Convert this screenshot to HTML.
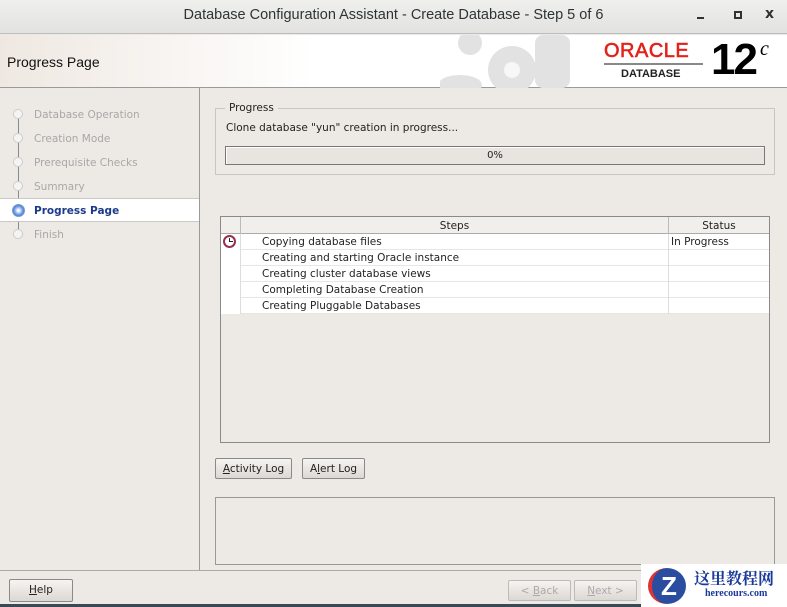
<!DOCTYPE html>
<html><head><style>
*{margin:0;padding:0;box-sizing:border-box}
body{width:787px;height:607px;overflow:hidden;background:#ede9e4;font-family:"DejaVu Sans","Liberation Sans",sans-serif;font-size:10.5px;color:#222;position:relative}
.a{position:absolute}
.btn{position:absolute;border:1px solid #8a8a8a;border-radius:2px;background:linear-gradient(#f6f4f1,#dcd8d3);text-align:center;line-height:20px;font-size:10.5px}
.row{position:absolute;left:241px;width:528px;height:16px;border-bottom:1px solid #e6e6e6;background:#fff}
</style></head><body>
<div class="a" style="left:0;top:0;width:787px;height:34px;background:linear-gradient(#efefee,#e2e2e1);border-bottom:1px solid #bdbdbd"></div>
<div class="a" style="left:0;top:7px;width:787px;text-align:center;font-family:'Liberation Sans',sans-serif;font-size:14.5px;color:#2e3436">Database Configuration Assistant - Create Database - Step 5 of 6</div>
<div class="a" style="left:697px;top:17px;width:7px;height:2px;background:#2e3436"></div>
<div class="a" style="left:734px;top:11px;width:8px;height:8px;border:2px solid #2e3436"></div>
<div class="a" style="left:765px;top:6px;font-size:14px;font-weight:bold;color:#2e3436">x</div>
<div class="a" style="left:0;top:35px;width:787px;height:53px;background:linear-gradient(90deg,#efe8e2,#fff 40%,#fff);border-bottom:1px solid #9a9a9a"></div>
<div class="a" style="left:7px;top:54px;font-family:'Liberation Sans',sans-serif;font-size:14px;color:#111">Progress Page</div>
<svg class="a" style="left:440px;top:35px" width="140" height="53"><g fill="#e2e2e2"><circle cx="72" cy="35" r="24"/><circle cx="30" cy="8" r="12"/><rect x="95" y="0" width="35" height="53" rx="8"/><ellipse cx="20" cy="50" rx="22" ry="10"/></g><circle cx="72" cy="35" r="8" fill="#f7f7f7"/></svg>
<div class="a" style="left:604px;top:40px;font-family:'Liberation Sans',sans-serif;font-size:20px;color:#e2231a;letter-spacing:0.5px;-webkit-text-stroke:0.6px #e2231a">ORACLE</div>
<div class="a" style="left:604px;top:63px;width:99px;height:2px;background:#888"></div>
<div class="a" style="left:621px;top:68px;font-family:'Liberation Sans',sans-serif;font-size:11px;font-weight:bold;color:#222">DATABASE</div>
<div class="a" style="left:711px;top:36px;font-family:'Liberation Sans',sans-serif;font-size:44px;font-weight:bold;color:#000;letter-spacing:-2px;line-height:48px">12</div>
<div class="a" style="left:760px;top:38px;font-family:'Liberation Serif',serif;font-style:italic;font-size:20px;color:#000">c</div>
<div class="a" style="left:199px;top:88px;width:1px;height:482px;background:#9a9a9a"></div>
<div class="a" style="left:18px;top:112px;width:1px;height:124px;background:#8a8a8a"></div>
<div class="a" style="left:0;top:198px;width:199px;height:24px;background:#fff;border-top:1px solid #c8c8c8;border-bottom:1px solid #c8c8c8"></div>
<div class="a" style="left:13px;top:109px;width:10px;height:10px;border-radius:50%;background:#f4f4f4;border:1px solid #ccc"></div>
<div class="a" style="left:13px;top:133px;width:10px;height:10px;border-radius:50%;background:#f4f4f4;border:1px solid #ccc"></div>
<div class="a" style="left:13px;top:157px;width:10px;height:10px;border-radius:50%;background:#f4f4f4;border:1px solid #ccc"></div>
<div class="a" style="left:13px;top:181px;width:10px;height:10px;border-radius:50%;background:#f4f4f4;border:1px solid #ccc"></div>
<div class="a" style="left:12px;top:204px;width:13px;height:13px;border-radius:50%;background:radial-gradient(#fff 10%,#5b8fe0 60%,#2a5cb8);border:1px solid #7a9ccc"></div>
<div class="a" style="left:13px;top:229px;width:10px;height:10px;border-radius:50%;background:#f4f4f4;border:1px solid #ccc"></div>
<div class="a" style="left:34px;top:109px;color:#a8a8a8;line-height:12px">Database Operation</div>
<div class="a" style="left:34px;top:133px;color:#a8a8a8;line-height:12px">Creation Mode</div>
<div class="a" style="left:34px;top:157px;color:#a8a8a8;line-height:12px">Prerequisite Checks</div>
<div class="a" style="left:34px;top:181px;color:#a8a8a8;line-height:12px">Summary</div>
<div class="a" style="left:34px;top:205px;color:#1a3a8a;font-weight:bold;line-height:12px">Progress Page</div>
<div class="a" style="left:34px;top:229px;color:#a8a8a8;line-height:12px">Finish</div>
<div class="a" style="left:215px;top:108px;width:560px;height:67px;border:1px solid #c9c5c0"></div>
<div class="a" style="left:225px;top:102px;padding:0 4px;background:#ede9e4">Progress</div>
<div class="a" style="left:226px;top:122px">Clone database "yun" creation in progress...</div>
<div class="a" style="left:225px;top:146px;width:540px;height:19px;border:1px solid #777;background:#e8e5e1;text-align:center;line-height:17px;font-size:10px;box-shadow:inset 1px 1px 0 #fff">0%</div>
<div class="a" style="left:220px;top:216px;width:550px;height:227px;border:1px solid #8a8a8a;background:#ede9e4"></div>
<div class="a" style="left:221px;top:217px;width:548px;height:17px;background:#f1efec;border-bottom:1px solid #aaa"></div>
<div class="a" style="left:240px;top:217px;width:1px;height:97px;background:#bbb"></div>
<div class="a" style="left:668px;top:217px;width:1px;height:97px;background:#bbb"></div>
<div class="a" style="left:241px;top:220px;width:427px;text-align:center">Steps</div>
<div class="a" style="left:669px;top:220px;width:100px;text-align:center">Status</div>
<div class="a" style="left:221px;top:234px;width:19px;height:80px;background:#fff"></div>
<div class="row" style="top:234px"></div><div class="row" style="top:250px"></div><div class="row" style="top:266px"></div><div class="row" style="top:282px"></div><div class="row" style="top:298px"></div>
<div class="a" style="left:668px;top:234px;width:1px;height:80px;background:#ddd"></div>
<div class="a" style="left:240px;top:234px;width:1px;height:80px;background:#ddd"></div>
<div class="a" style="left:223px;top:235px;width:13px;height:13px;border-radius:50%;border:2px solid #9a3050;background:#fff"></div>
<div class="a" style="left:229px;top:238px;width:1px;height:4px;background:#223"></div>
<div class="a" style="left:229px;top:241px;width:4px;height:1px;background:#223"></div>
<div class="a" style="left:262px;top:236px">Copying database files</div>
<div class="a" style="left:671px;top:236px">In Progress</div>
<div class="a" style="left:262px;top:252px">Creating and starting Oracle instance</div>
<div class="a" style="left:262px;top:268px">Creating cluster database views</div>
<div class="a" style="left:262px;top:284px">Completing Database Creation</div>
<div class="a" style="left:262px;top:300px">Creating Pluggable Databases</div>
<div class="btn" style="left:215px;top:458px;width:77px;height:21px"><u>A</u>ctivity Log</div>
<div class="btn" style="left:302px;top:458px;width:63px;height:21px">A<u>l</u>ert Log</div>
<div class="a" style="left:215px;top:497px;width:560px;height:68px;border:1px solid #999;background:#ede9e4"></div>
<div class="a" style="left:0;top:570px;width:787px;height:1px;background:#aaa"></div>
<div class="btn" style="left:9px;top:579px;width:64px;height:23px;line-height:21px"><u>H</u>elp</div>
<div class="btn" style="left:508px;top:580px;width:63px;height:21px;color:#aaa;border-color:#bbb">&lt; <u>B</u>ack</div>
<div class="btn" style="left:574px;top:580px;width:63px;height:21px;color:#aaa;border-color:#bbb"><u>N</u>ext &gt;</div>
<div class="a" style="left:0;top:604px;width:787px;height:3px;background:#3a4a55"></div>
<div class="a" style="left:641px;top:564px;width:146px;height:43px;background:#fff"></div>
<div class="a" style="left:648px;top:568px;width:38px;height:36px;border-radius:50%;background:#2a4da0;color:#fff;font:bold 26px 'Liberation Sans',sans-serif;text-align:center;line-height:36px;border-left:4px solid #d33">Z</div>
<div class="a" style="left:694px;top:566px;font:bold 16px 'Noto Serif CJK SC','Noto Sans CJK SC',serif;color:#1a3a9a">这里教程网</div>
<div class="a" style="left:705px;top:588px;font:bold 10px 'Liberation Serif',serif;color:#1a3a9a">herecours.com</div>
</body></html>
